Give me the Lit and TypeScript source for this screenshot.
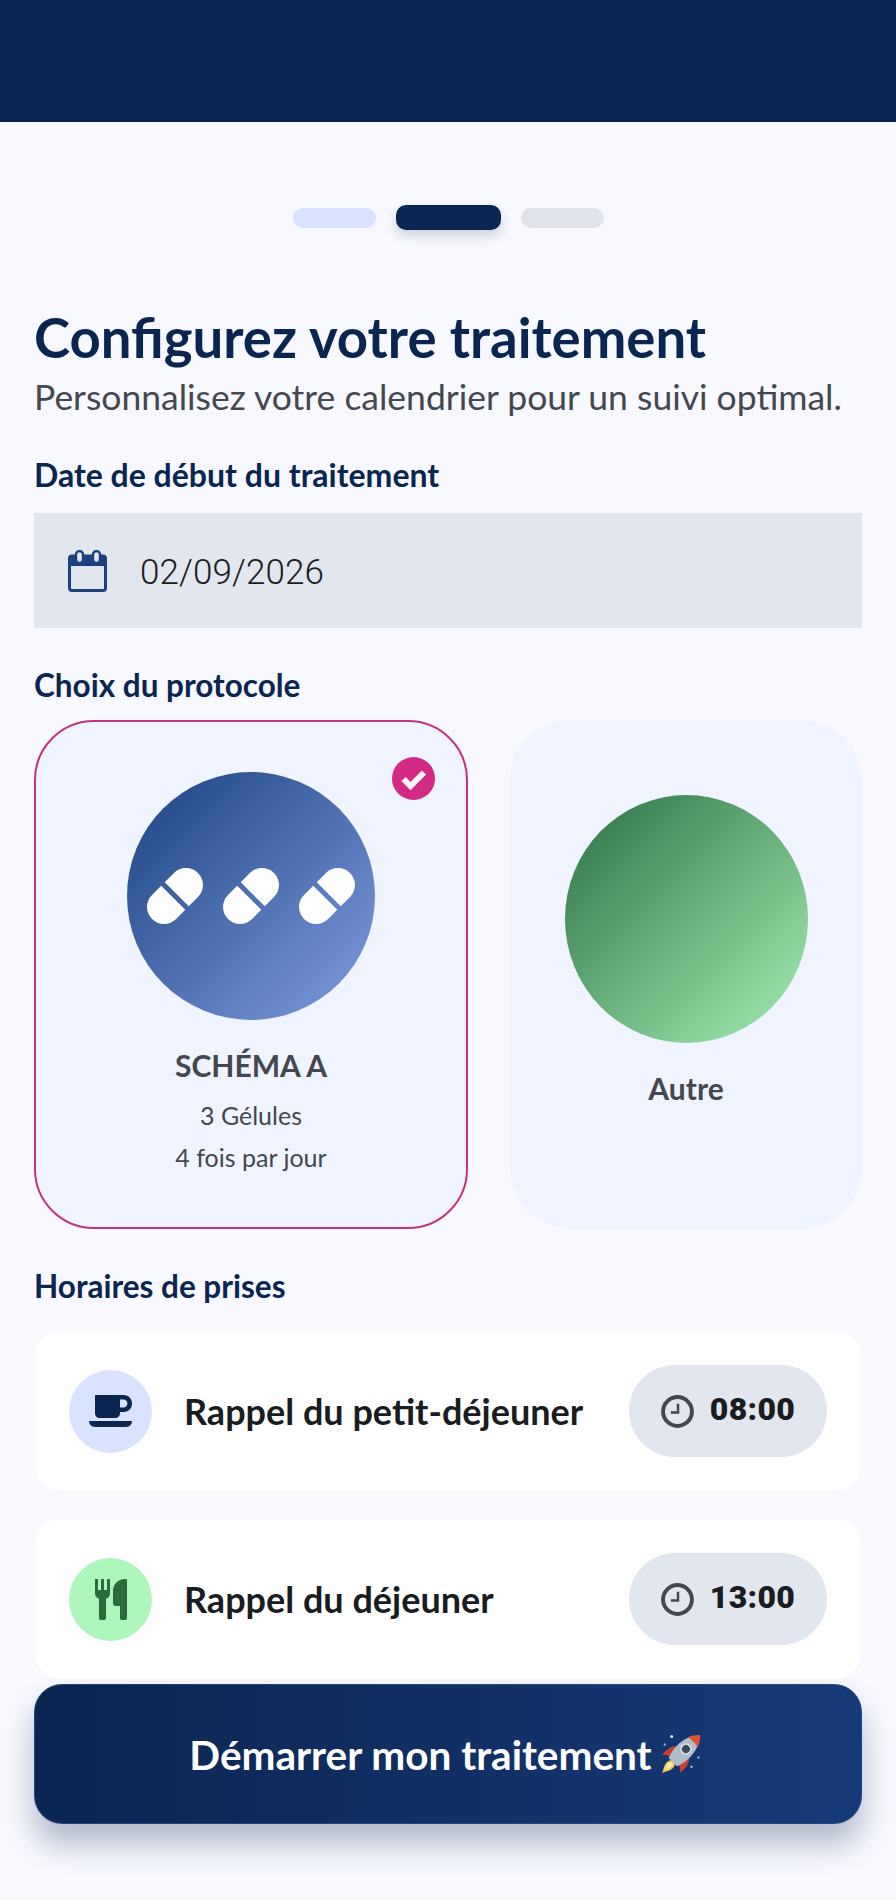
import { LitElement, html, css, svg } from "lit";
import { customElement } from "lit/decorators.js";

const pill = svg`<g transform="rotate(-45 28 28)" fill="#fff">
  <path d="M25.5 11H12.5A17 17 0 0 0 12.5 45H25.5Z" />
  <path d="M30.5 11H43.5A17 17 0 0 1 43.5 45H30.5Z" />
</g>`;

const clock = html`<svg class="clock" viewBox="0 0 32 32">
  <circle cx="16" cy="16" r="14" fill="none" stroke="#44474f" stroke-width="3.8" />
  <path d="M16.5 8.5V17H9.5" fill="none" stroke="#44474f" stroke-width="2.4" />
</svg>`;

const cup = html`<svg class="cup" viewBox="0 0 43 32">
  <path fill="#0a2550" fill-rule="evenodd" d="M6 0H35C39.5 0 43 3.6 43 8.5S39.5 17 35 17H31V18C31 21 29 23 26 23H11C8 23 6 21 6 18ZM31 4.5V12.5H34.5C36.8 12.5 38.4 10.8 38.4 8.5S36.8 4.5 34.5 4.5Z" />
  <path fill="#0a2550" d="M0 26H43C43 29 40.5 32 37 32H6C2.5 32 0 29 0 26Z" />
</svg>`;

const cutlery = html`<svg class="cutlery" viewBox="0 0 32 41">
  <path fill="#2b6b3d" d="M0 0H3V11H6V0H9V11H12V0H15V14C15 17 13.5 19 11 19.8V39C11 40.4 10 41 8.5 41H6.5C5 41 4 40.4 4 39V19.8C1.5 19 0 17 0 14Z" />
  <path fill="#2b6b3d" d="M32 0V39C32 40.4 31 41 29.5 41H27C25.6 41 25 40.2 25 39V27H21C19 27 18 26 18 24V12C18 5 23 0 30 0Z" />
</svg>`;

const rocket = html`<svg class="rocket" viewBox="3 3 36 36">
  <circle cx="13" cy="6" r="1.3" fill="#dbe6f5" />
  <circle cx="7" cy="13" r="0.9" fill="#9fc0e8" />
  <circle cx="36" cy="24" r="1" fill="#9fc0e8" />
  <circle cx="30" cy="32" r="0.9" fill="#dbe6f5" />
  <g transform="rotate(45 21 21) translate(0 -1)">
    <path fill="#f4c95a" d="M21 31C24 31 25 34 24.5 37C24 40 22 42 21 45C20 42 18 40 17.5 37C17 34 18 31 21 31Z" />
    <path fill="#fff0b8" d="M21 33C22.5 33 23 35 22.6 37C22.3 38.5 21.5 39.5 21 41C20.5 39.5 19.7 38.5 19.4 37C19 35 19.5 33 21 33Z" />
    <path fill="#c8402e" d="M14.5 19C10.5 22 9.5 27 10 34C12 31.5 14 30.5 16.5 30Z" />
    <path fill="#c8402e" d="M27.5 19C31.5 22 32.5 27 32 34C30 31.5 28 30.5 25.5 30Z" />
    <path fill="#aebccb" d="M21 0C26.5 5 28.5 12 28.5 19C28.5 24 27.5 28 26 32H16C14.5 28 13.5 24 13.5 19C13.5 12 15.5 5 21 0Z" />
    <path fill="#e0512f" d="M21 -1C24 1.5 26 4.5 27 8C23.5 6.8 18.5 6.8 15 8C16 4.5 18 1.5 21 -1Z" />
    <circle cx="21" cy="16" r="4.2" fill="#3d4a57" stroke="#dfe7ee" stroke-width="1.4" />
  </g>
</svg>`;

const meals = [
  { label: "Rappel du petit-déjeuner", time: "08:00", icon: cup, tone: "blue" },
  { label: "Rappel du déjeuner", time: "13:00", icon: cutlery, tone: "green" },
];

@customElement("app-root")
export class AppRoot extends LitElement {
  static styles = css`
    :host {
      display: block;
      height: 1900px;
      overflow: hidden;
      background: #f8f9ff;
      font-family: "Lato", "Noto Sans", sans-serif;
    }

    .top {
      height: 122px;
      background: #0a2550;
    }

    .content {
      padding: 0 34px;
    }

    .steps {
      display: flex;
      justify-content: center;
      align-items: center;
      gap: 20px;
      height: 25px;
      margin-top: 83px;
    }
    .steps span {
      width: 83px;
      height: 20px;
      border-radius: 10px;
      background: #d9e2ff;
    }
    .steps .on {
      width: 105px;
      height: 25px;
      border-radius: 10px;
      background: #0a2550;
      box-shadow: 0 6px 12px rgba(10, 37, 80, 0.18);
    }
    .steps .off {
      background: #e1e3ea;
    }

    h1 {
      margin: 79px 0 0;
      font-size: 54.5px;
      line-height: 56px;
      font-weight: 700;
      color: #0a2550;
    }
    .sub {
      margin: 10px 0 0;
      font-size: 35.5px;
      line-height: 44px;
      font-weight: 400;
      color: #44474f;
    }

    .label {
      margin: 0;
      font-size: 31.5px;
      line-height: 36px;
      font-weight: 700;
      color: #0a2550;
    }
    .label.date {
      margin-top: 38px;
      font-size: 32px;
    }
    .label.proto {
      margin-top: 39px;
    }
    .label.hours {
      margin-top: 39px;
    }

    .field {
      display: flex;
      align-items: center;
      gap: 33px;
      height: 115px;
      margin-top: 20px;
      padding-left: 34px;
      background: #e1e6ef;
      font-family: "Roboto", sans-serif;
      font-weight: 300;
      font-size: 35px;
      letter-spacing: 0.1px;
      color: #191c20;
    }
    .field span {
      padding-top: 4px;
    }
    .calendar {
      width: 39px;
      height: 42px;
      flex: none;
    }

    .cards {
      display: flex;
      gap: 42px;
      margin-top: 17px;
    }
    .card {
      position: relative;
      display: flex;
      flex-direction: column;
      align-items: center;
      box-sizing: border-box;
      height: 509px;
      border-radius: 60px;
      background: #f0f4fe;
      color: #44474f;
    }
    .card.a {
      width: 434px;
      padding-top: 50px;
      border: 2px solid #c0347e;
    }
    .card.b {
      width: 352px;
      padding-top: 75px;
    }
    .disc {
      flex: none;
      border-radius: 50%;
    }
    .a .disc {
      width: 248px;
      height: 248px;
      background: linear-gradient(135deg, #1b4280, #7f9de0);
      display: flex;
      align-items: center;
      justify-content: center;
      gap: 20px;
    }
    .b .disc {
      width: 243px;
      height: 248px;
      background: linear-gradient(135deg, #2c7044, #a6eeb4);
    }
    .disc svg {
      width: 56px;
      height: 56px;
      flex: none;
    }
    .name {
      margin-top: 25px;
      font-size: 30px;
      line-height: 40px;
      font-weight: 700;
    }
    .detail {
      font-size: 25px;
      line-height: 42px;
      font-weight: 400;
    }
    .detail.first {
      margin-top: 9px;
    }
    .badge {
      position: absolute;
      top: 35px;
      right: 31px;
      width: 43px;
      height: 43px;
    }

    .rows {
      display: flex;
      flex-direction: column;
      gap: 28px;
      margin: 27px 2px 0;
    }
    .row {
      display: flex;
      align-items: center;
      box-sizing: border-box;
      height: 160px;
      padding: 0 33px;
      border-radius: 24px;
      background: #fff;
    }
    .icon {
      display: flex;
      align-items: center;
      justify-content: center;
      width: 83px;
      height: 83px;
      flex: none;
      border-radius: 50%;
    }
    .icon.blue {
      background: #d9e2ff;
    }
    .icon.green {
      background: #adf5bb;
    }
    .cup {
      width: 43px;
      height: 32px;
    }
    .cutlery {
      width: 32px;
      height: 41px;
    }
    .row-label {
      flex: 1;
      margin-left: 32px;
      font-size: 36px;
      font-weight: 700;
      color: #191c20;
    }
    .time {
      display: flex;
      align-items: center;
      justify-content: center;
      gap: 16px;
      width: 198px;
      height: 92px;
      flex: none;
      border-radius: 46px;
      background: #e1e6ef;
      font-family: "Roboto", sans-serif;
      font-size: 32px;
      letter-spacing: 0.3px;
      font-weight: 900;
      color: #191c20;
    }
    .time span {
      padding-bottom: 4px;
    }
    .clock {
      width: 33px;
      height: 33px;
      flex: none;
    }

    .start {
      display: flex;
      align-items: center;
      justify-content: center;
      gap: 8px;
      box-sizing: border-box;
      width: 100%;
      height: 140px;
      margin-top: 5px;
      padding: 0 5px 0 0;
      border: 1px solid #24477f;
      border-radius: 28px;
      background: linear-gradient(90deg, #0a2550, #163a78);
      box-shadow: 0 20px 30px rgba(10, 37, 80, 0.3);
      font-family: inherit;
      font-size: 40.5px;
      font-weight: 700;
      color: #fff;
    }
    .rocket {
      width: 42px;
      height: 42px;
    }
  `;

  render() {
    return html`
      <div class="top"></div>
      <div class="content">
        <div class="steps">
          <span></span>
          <span class="on"></span>
          <span class="off"></span>
        </div>

        <h1>Configurez votre traitement</h1>
        <p class="sub">Personnalisez votre calendrier pour un suivi optimal.</p>

        <p class="label date">Date de début du traitement</p>
        <div class="field">
          <svg class="calendar" viewBox="0 0 39 42">
            <rect x="1.5" y="6" width="36" height="34.5" rx="2.5" fill="none" stroke="#1d4080" stroke-width="3" />
            <rect x="1.5" y="6" width="36" height="10" fill="#1d4080" />
            <rect x="8" y="1" width="7" height="12" rx="3.5" fill="#e1e6ef" stroke="#1d4080" stroke-width="2.4" />
            <rect x="25" y="1" width="7" height="12" rx="3.5" fill="#e1e6ef" stroke="#1d4080" stroke-width="2.4" />
          </svg>
          <span>02/09/2026</span>
        </div>

        <p class="label proto">Choix du protocole</p>
        <div class="cards">
          <div class="card a">
            <svg class="badge" viewBox="0 0 43 43">
              <circle cx="21.5" cy="21.5" r="21.5" fill="#d42a85" />
              <path d="M11.5 22L18.5 29L32 15.5" fill="none" stroke="#fdf0f7" stroke-width="6" />
            </svg>
            <div class="disc">
              <svg viewBox="0 0 56 56">${pill}</svg>
              <svg viewBox="0 0 56 56">${pill}</svg>
              <svg viewBox="0 0 56 56">${pill}</svg>
            </div>
            <div class="name">SCHÉMA A</div>
            <div class="detail first">3 Gélules</div>
            <div class="detail">4 fois par jour</div>
          </div>
          <div class="card b">
            <div class="disc"></div>
            <div class="name">Autre</div>
          </div>
        </div>

        <p class="label hours">Horaires de prises</p>
        <div class="rows">
          ${meals.map(
            (m) => html`
              <div class="row">
                <div class="icon ${m.tone}">${m.icon}</div>
                <div class="row-label">${m.label}</div>
                <div class="time">${clock}<span>${m.time}</span></div>
              </div>
            `
          )}
        </div>

        <button class="start">Démarrer mon traitement ${rocket}</button>
      </div>
    `;
  }
}
